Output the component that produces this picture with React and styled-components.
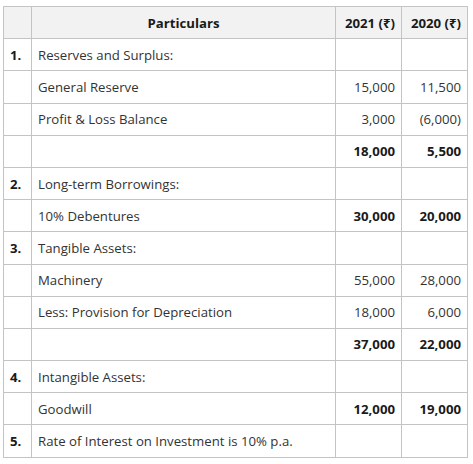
import React from "react";
import styled, { createGlobalStyle } from "styled-components";

const GlobalStyle = createGlobalStyle`
  body {
    margin: 0;
    padding: 0;
    background: #ffffff;
    color: #222222;
    font-family: "Open Sans", "Noto Sans", sans-serif;
  }
`;

const Wrapper = styled.div`
  padding: 6px 0 0 3px;
`;

const Table = styled.table`
  border-collapse: collapse;
  table-layout: fixed;
  width: 465px;
  font-size: 13.2px;
`;

const HeadCell = styled.th`
  background: #f2f2f2;
  border: 1px solid #c4c4c4;
  height: 31.2px;
  padding: 0 6px;
  font-weight: 700;
  text-align: ${(p) => (p.$right ? "right" : "center")};
  color: #1a1a1a;
  white-space: nowrap;
`;

const Cell = styled.td`
  border: 1px solid #c4c4c4;
  height: 31.2px;
  padding: 0 6px;
  text-align: ${(p) => (p.$right ? "right" : "left")};
  font-weight: ${(p) => (p.$bold ? 700 : 400)};
  color: ${(p) => (p.$bold ? "#1a1a1a" : "#333333")};
  white-space: nowrap;
`;

const rows = [
  { no: "1.", text: "Reserves and Surplus:" },
  { text: "General Reserve", a: "15,000", b: "11,500" },
  { text: "Profit & Loss Balance", a: "3,000", b: "(6,000)" },
  { a: "18,000", b: "5,500", bold: true },
  { no: "2.", text: "Long-term Borrowings:" },
  { text: "10% Debentures", a: "30,000", b: "20,000", bold: true },
  { no: "3.", text: "Tangible Assets:" },
  { text: "Machinery", a: "55,000", b: "28,000" },
  { text: "Less: Provision for Depreciation", a: "18,000", b: "6,000" },
  { a: "37,000", b: "22,000", bold: true },
  { no: "4.", text: "Intangible Assets:" },
  { text: "Goodwill", a: "12,000", b: "19,000", bold: true },
  { no: "5.", text: "Rate of Interest on Investment is 10% p.a." },
];

const App = () => (
  <>
    <GlobalStyle />
    <Wrapper>
      <Table>
        <colgroup>
          <col style={{ width: 28 }} />
          <col style={{ width: 304 }} />
          <col style={{ width: 66 }} />
          <col style={{ width: 66 }} />
        </colgroup>
        <thead>
          <tr>
            <HeadCell />
            <HeadCell>Particulars</HeadCell>
            <HeadCell $right>2021 (₹)</HeadCell>
            <HeadCell $right>2020 (₹)</HeadCell>
          </tr>
        </thead>
        <tbody>
          {rows.map((r, i) => (
            <tr key={i}>
              <Cell $bold>{r.no}</Cell>
              <Cell>{r.text}</Cell>
              <Cell $right $bold={r.bold}>{r.a}</Cell>
              <Cell $right $bold={r.bold}>{r.b}</Cell>
            </tr>
          ))}
        </tbody>
      </Table>
    </Wrapper>
  </>
);

export default App;
